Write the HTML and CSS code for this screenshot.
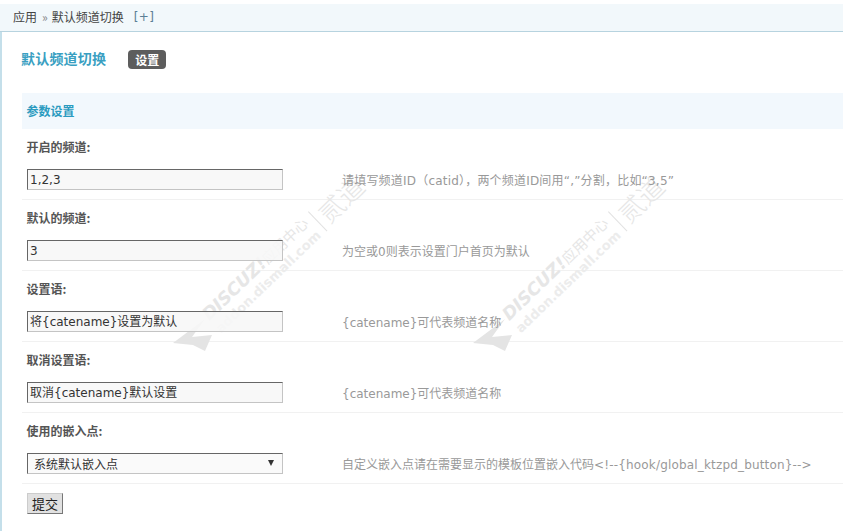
FILE: index.html
```html
<!DOCTYPE html>
<html lang="zh">
<head>
<meta charset="utf-8">
<title>默认频道切换</title>
<link rel="stylesheet" href="styles.css">
</head>
<body>
<div class="page">
  <div class="crumbs"><span>应用</span><span class="sep">»</span><span>默认频道切换</span><span class="plus">[+]</span></div>
  <div class="main">
    <div class="titlebar"><h1>默认频道切换</h1><span class="pill">设置</span></div>
    <form class="panel">
      <h2 class="section">参数设置</h2>
      <div class="row">
        <label class="lab">开启的频道:</label>
        <div class="fields"><div class="input">1,2,3</div><div class="hint wide">请填写频道ID（catid），两个频道ID间用“,”分割，比如“3,5”</div></div>
      </div>
      <div class="row">
        <label class="lab">默认的频道:</label>
        <div class="fields"><div class="input">3</div><div class="hint">为空或0则表示设置门户首页为默认</div></div>
      </div>
      <div class="row">
        <label class="lab">设置语:</label>
        <div class="fields"><div class="input">将{catename}设置为默认</div><div class="hint">{catename}可代表频道名称</div></div>
      </div>
      <div class="row">
        <label class="lab">取消设置语:</label>
        <div class="fields"><div class="input">取消{catename}默认设置</div><div class="hint">{catename}可代表频道名称</div></div>
      </div>
      <div class="row">
        <label class="lab">使用的嵌入点:</label>
        <div class="fields"><div class="input select"><span>系统默认嵌入点</span><span class="caret"></span></div><div class="hint">自定义嵌入点请在需要显示的模板位置嵌入代码<span class="code">&lt;!--{hook/global_ktzpd_button}--&gt;</span></div></div>
      </div>
      <div class="submit"><span class="btn">提交</span></div>
    </form>
  </div>
  <div class="mark one">
    <svg class="plane" width="40" height="33" viewBox="0 0 40 33"><path d="M0 24 L32 0 L19 18 L39 16 L32 32 L20 26 Z"/></svg>
    <div class="mark-text">
      <div class="mark-line"><b>DISCUZ!</b><span class="cn">应用中心</span><i class="bar"></i><span class="name">贰道</span></div>
      <div class="mark-addr">addon.dismall.com</div>
    </div>
  </div>
  <div class="mark two">
    <svg class="plane" width="40" height="33" viewBox="0 0 40 33"><path d="M0 24 L32 0 L19 18 L39 16 L32 32 L20 26 Z"/></svg>
    <div class="mark-text">
      <div class="mark-line"><b>DISCUZ!</b><span class="cn">应用中心</span><i class="bar"></i><span class="name">贰道</span></div>
      <div class="mark-addr">addon.dismall.com</div>
    </div>
  </div>
</div>
</body>
</html>
```
FILE: styles.css
```css
* { box-sizing: border-box; }
html, body { margin: 0; padding: 0; background: #fff; overflow: hidden; }
body { font: 12px/16px "DejaVu Sans", "Noto Sans CJK SC", sans-serif; color: #444; }
.page { position: relative; width: 843px; height: 531px; overflow: hidden; padding-top: 4px; display: flex; flex-direction: column; }
.crumbs { height: 28px; padding: 5px 0 0 13px; background: #f2f8fb; border-bottom: 1px solid #b7d3df; display: flex; gap: 4px; color: #444; font-family: "Noto Sans CJK SC", sans-serif; }
.sep { margin-left: 1px; color: #888; }
.plus { margin-left: 6px; color: #5b7f96; font-family: "DejaVu Sans", sans-serif; letter-spacing: 0.4px; }
.main { flex: 1; border-left: 2px solid #c4dfea; }
.titlebar { display: flex; align-items: center; height: 61px; padding: 0 0 6px 19px; }
h1 { margin: -3px 0 0; font: 700 14px/20px "Noto Sans CJK SC", sans-serif; letter-spacing: 0.2px; color: #3a9fc2; }
.pill { margin-left: 22px; padding: 0 7px; height: 19px; width: 38px; background: #5d5d5d; border-radius: 4px; color: #fff; font: 700 12px/19px "Noto Sans CJK SC", sans-serif; white-space: nowrap; }
.panel { margin: 0 0 0 20px; }
.section { margin: 0; height: 36px; padding: 0 4.5px; background: #f2f8fd; color: #2b9bc0; font: 700 12px/36px "Noto Sans CJK SC", sans-serif; }
.row { height: 71px; padding: 9px 5px 0; border-bottom: 1px solid #f1f1f1; }
.lab { display: block; height: 18px; margin-left: -0.5px; font: 700 12px/18px "Noto Sans CJK SC", sans-serif; color: #555; }
.fields { display: flex; align-items: center; margin-top: 13px; }
.input { position: relative; z-index: 1; width: 256px; height: 21px; padding: 0 2px; border: 1px solid #c4c4c4; border-top-color: #666; border-left-color: #666; background: rgba(247, 247, 247, 0.88); color: #333; font: 12px/20px "DejaVu Sans", "Noto Sans CJK SC", sans-serif; white-space: nowrap; }
.select { display: flex; align-items: center; justify-content: space-between; padding: 3px 8px 0 6px; background: #fafafa; }
.caret { width: 0; height: 0; margin-top: -4px; border-left: 3px solid transparent; border-right: 3px solid transparent; border-top: 6px solid #333; }
.hint { position: relative; z-index: 1; margin: 3px 0 0 59px; color: #999; font: 12px/16px "DejaVu Sans", "Noto Sans CJK SC", sans-serif; white-space: nowrap; }
.wide { letter-spacing: 0.2px; }
.code { letter-spacing: 0.17px; }
.submit { padding: 9px 5px 0; }
.btn { display: block; width: 36px; height: 21px; border: 1px solid #777; border-top-color: #ccc; border-left-color: #ccc; background: #e1e1e1; color: #222; text-align: center; font: 13px/19px "Noto Sans CJK SC", sans-serif; }
.mark { position: absolute; top: 319px; width: 0; height: 0; pointer-events: none; }
.mark.one { left: 173px; }
.mark.two { left: 473px; }
.plane { position: absolute; left: 0; top: 0; fill: #e4e4e4; }
.mark-text { position: absolute; left: 32px; top: -14px; width: 260px; transform-origin: 0 12px; transform: rotate(-44deg); color: #e6e6e6; }
.mark-line { display: flex; align-items: center; height: 24px; white-space: nowrap; font-family: "DejaVu Sans", "Noto Sans CJK SC", sans-serif; }
.mark-line b { font: italic 700 17.5px/24px "DejaVu Sans", sans-serif; }
.cn { font: 14.5px/24px "Noto Sans CJK SC", sans-serif; }
.bar { width: 1px; height: 27px; margin: 18px 5px 0 8px; background: #e2e2e2; }
.name { margin-top: 18px; font: 300 26px/24px "Noto Sans CJK SC", sans-serif; }
.mark-addr { margin-top: -1px; font: 700 13px/15px "DejaVu Sans", sans-serif; letter-spacing: 0.1px; white-space: nowrap; color: #ececec; }
```
